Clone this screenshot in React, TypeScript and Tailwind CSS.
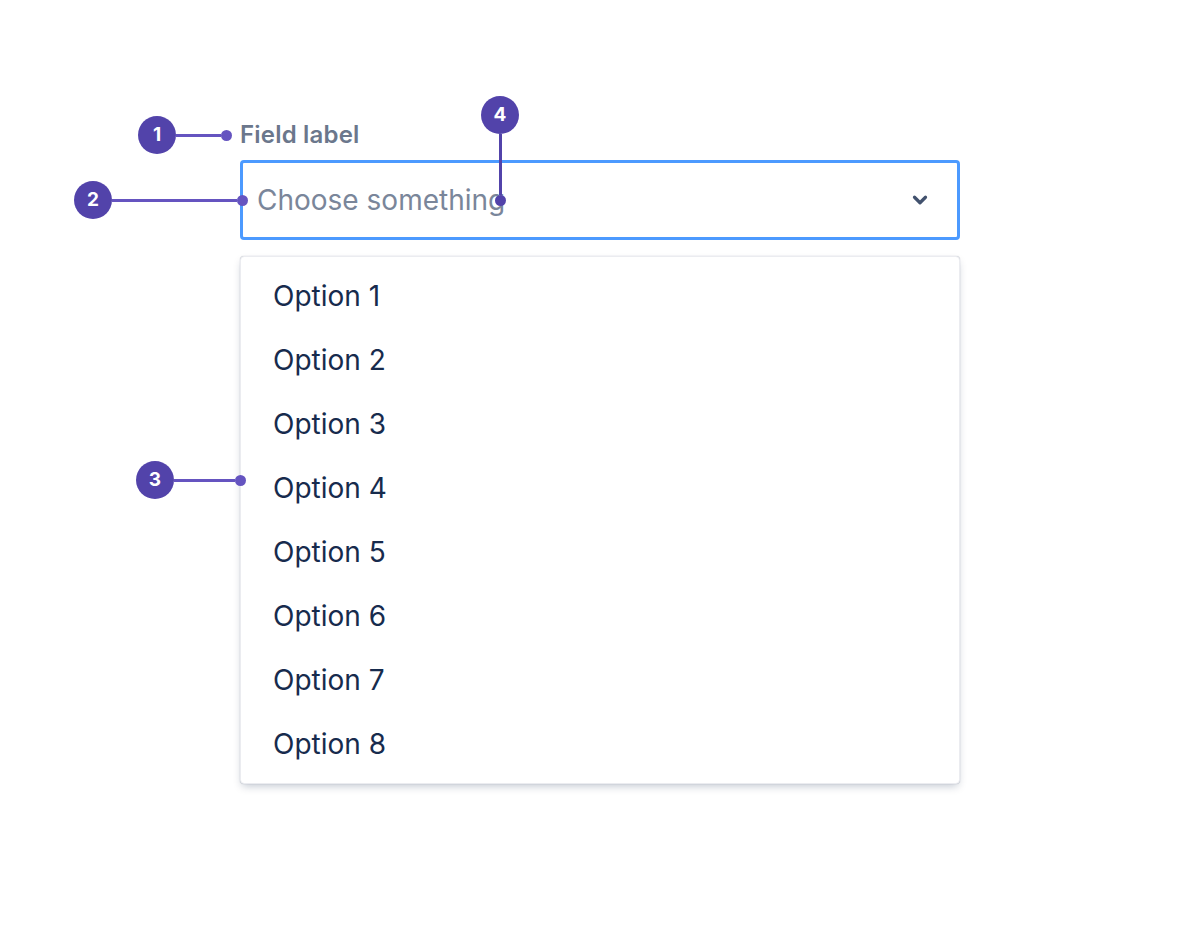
import { ChevronDown } from "lucide-react";

const options = [
  "Option 1",
  "Option 2",
  "Option 3",
  "Option 4",
  "Option 5",
  "Option 6",
  "Option 7",
  "Option 8",
];

// numbered callout: badge, connector line, end dot
const Callout = ({
  n,
  vertical,
  length,
  className,
}: {
  n: number;
  vertical?: boolean;
  length: string;
  className: string;
}) => (
  <div
    className={`absolute flex items-center ${vertical ? "flex-col" : "flex-row"} ${className}`}
  >
    <div className="flex h-[38px] w-[38px] shrink-0 items-center justify-center rounded-full bg-[#5243aa] text-[19px] font-bold text-white">
      {n}
    </div>
    <div
      className={`${vertical ? "w-[3px] bg-[#5243aa]" : "h-[3px] bg-[#6554c0]"} ${length}`}
    />
    <div
      className={`h-[11px] w-[11px] shrink-0 rounded-full ${vertical ? "bg-[#5243aa]" : "bg-[#6554c0]"}`}
    />
  </div>
);

export default function App() {
  return (
    <div className="relative h-[944px] w-[1200px] bg-white font-['Inter',sans-serif]">
      <div className="ml-[240px] w-[720px] pt-[120px]">
        <div className="h-[30px] text-[24px] font-semibold leading-[30px] tracking-[0.2px] text-[#6b778c]">
          Field label
        </div>
        <div className="mt-[10px] flex h-[80px] items-center justify-between rounded-[4px] border-[3px] border-[#4c9aff] pl-[14px] pr-[26px]">
          <span className="text-[28px] text-[#7a869a]">Choose something</span>
          <ChevronDown className="h-[22px] w-[22px] text-[#42526e]" strokeWidth={3.5} />
        </div>
        <div className="mt-[16px] rounded-[4px] border border-[#ebecf0] bg-white py-[7px] shadow-[0_4px_8px_-2px_rgba(9,30,66,0.25),0_0_1px_rgba(9,30,66,0.31)]">
          {options.map((o) => (
            <div
              key={o}
              className="flex h-[64px] items-center px-[32px] text-[28px] text-[#172b4d]"
            >
              {o}
            </div>
          ))}
        </div>
      </div>

      {/* annotations */}
      <Callout n={1} length="w-[45px]" className="left-[138px] top-[116px]" />
      <Callout n={2} length="w-[125px]" className="left-[74px] top-[181px]" />
      <Callout n={3} length="w-[61px]" className="left-[136px] top-[461px]" />
      <Callout n={4} vertical length="h-[61px]" className="left-[481px] top-[96px]" />
    </div>
  );
}
